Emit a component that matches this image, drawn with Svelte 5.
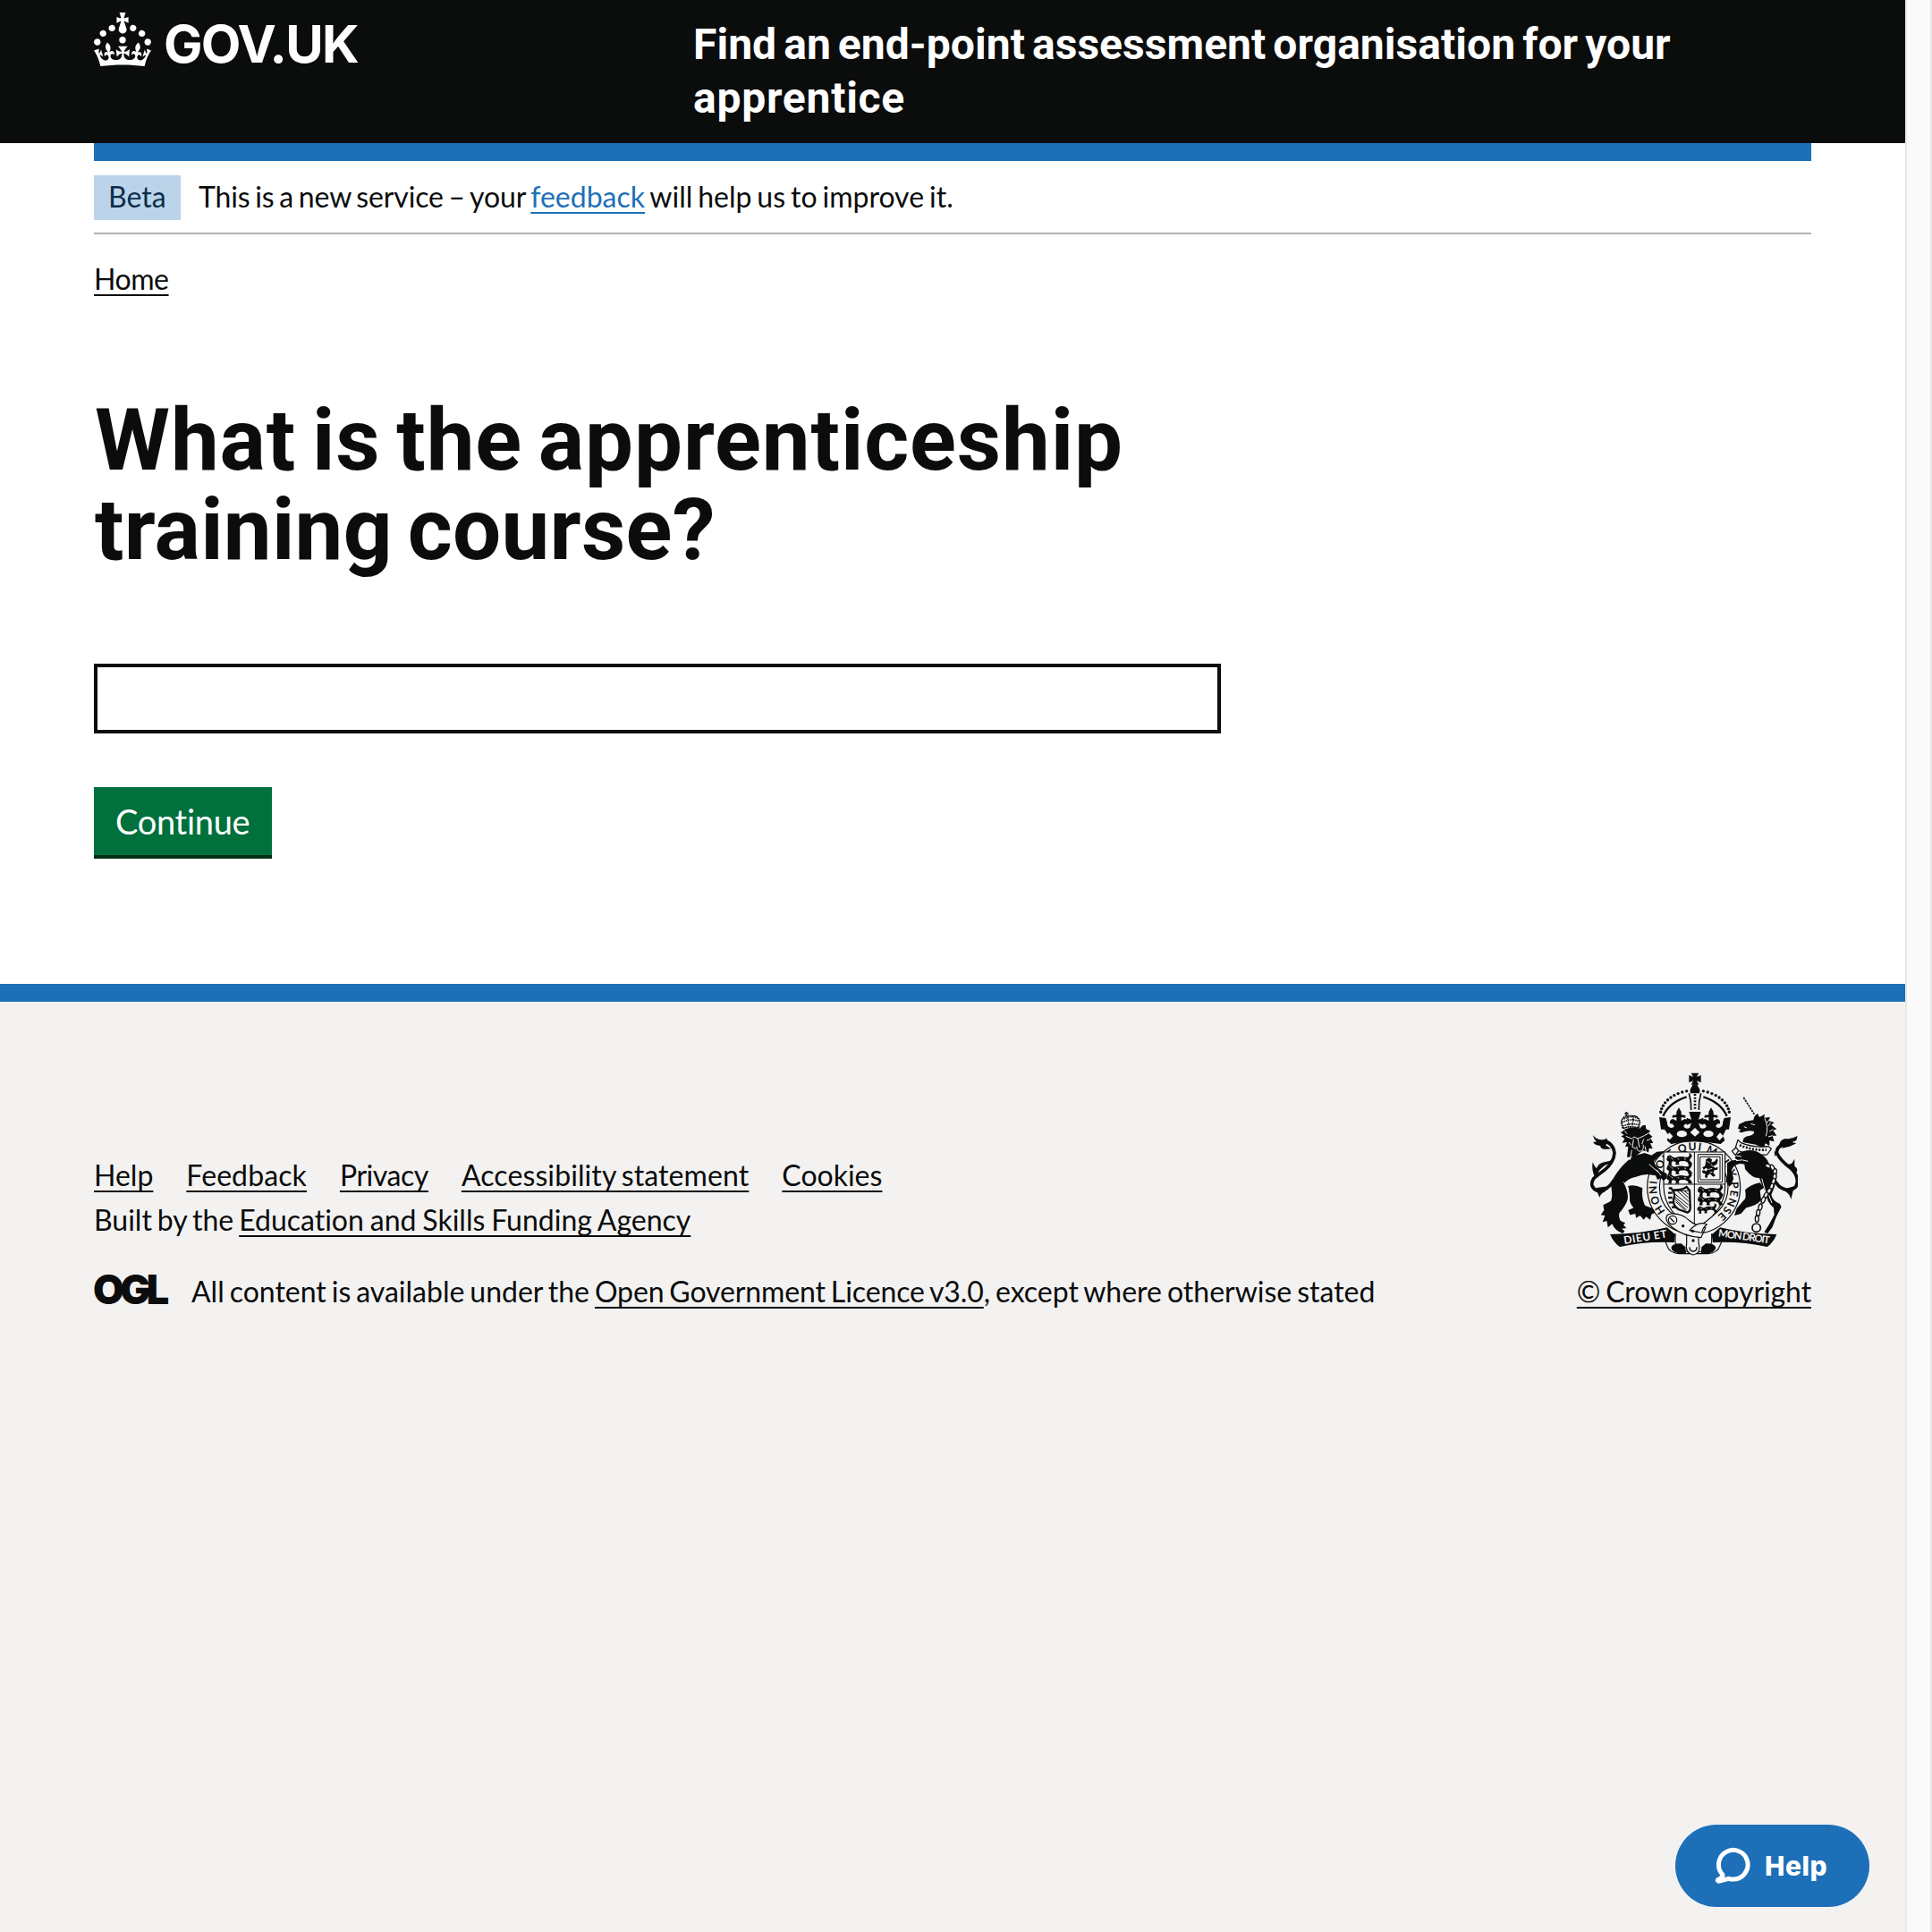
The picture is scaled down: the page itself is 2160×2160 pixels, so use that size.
<script>
  const footerLinks = [
    { label: 'Help', fit: '' },
    { label: 'Feedback', fit: 'wide' },
    { label: 'Privacy', fit: 'tight' },
    { label: 'Accessibility statement', fit: 'long' },
    { label: 'Cookies', fit: '' }
  ];

  // Pearls along the two arches of the royal crown
  const pearls = Array.from({ length: 10 }, (_, i) => {
    const a = ((i * 7.6 + 14) * Math.PI) / 180;
    return { dx: 116 * Math.sin(a), y: 202 - 84 * Math.cos(a) };
  });

  const passant =
    'M0 0q2-10 12-9l7 5q3 4 12 2 16-5 30-1 8 2 12-2 5-6 0-12l6 2q8 6 2 14l-6 8 9 10q2 5-3 6h-9l-2-8-10-5-16 1-5 5 3 7h-13l1-9-10-4-5 5 1 8h-12l3-11-6-3q-4-4-1-9z';
  const chain = [
    [714, 372, 20], [728, 378, 60], [736, 392, 95], [735, 408, 95], [731, 424, 110], [725, 441, 110],
    [716, 456, 125], [706, 470, 120], [697, 486, 110], [687, 510, 105], [680, 529, 95], [676, 549, 90]
  ];
</script>

{#snippet lion(x, y, r, s)}
  <g transform="translate({x} {y}) rotate({r}) scale({s})">
    <path d={passant} />
    <path class="nick" d="M14 0l6 5M36 1l4 5M58 2l6 3M8-4l3 3" />
  </g>
{/snippet}

<div class="page">
  <div class="site">
    <header class="header">
      <div class="container header-row">
        <a class="logo" href="#home" aria-label="GOV.UK">
          <svg class="crown" viewBox="0 0 32 30" aria-hidden="true">
            <path d="M22.6 10.4c-1 .4-2-.1-2.4-1-.4-.9.1-2 1-2.4.9-.4 2 .1 2.4 1s-.1 2-1 2.4m4.9 3c-1 .4-2-.1-2.4-1-.4-.9.1-2 1-2.4.9-.4 2 .1 2.4 1s0 2-1 2.4m3.3 4.8c-1 .4-2-.1-2.4-1-.4-.9.1-2 1-2.4.9-.4 2 .1 2.4 1s-.1 2-1 2.4M17 4.7l2.3 1.2V2.5l-2.3.7-.2-.2.9-3h-3.4l.9 3-.2.2c-.1.1-2.3-.7-2.3-.7v3.4L15 4.7c.1.1.1.2.2.2l-1.3 4c-.1.2-.1.4-.1.6 0 1.1.8 2 1.9 2.2h.7c1-.2 1.9-1.1 1.9-2.1 0-.2 0-.4-.1-.6l-1.3-4c-.1-.2 0-.2.1-.3m-7.6 5.7c.9.4 2-.1 2.4-1 .4-.9-.1-2-1-2.4-.9-.4-2 .1-2.4 1s0 2 1 2.4m-5 3c.9.4 2-.1 2.4-1 .4-.9-.1-2-1-2.4-.9-.4-2 .1-2.4 1s.1 2 1 2.4m-3.2 4.8c.9.4 2-.1 2.4-1 .4-.9-.1-2-1-2.4-.9-.4-2 .1-2.4 1s0 2 1 2.4m14.8 11c4.4 0 8.6.3 12.3.8 1.1-4.5 2.4-7 3.7-8.8l-2.5-.9c.2 1.3.3 1.9 0 2.7-.4-.4-.8-1.1-1.1-2.3l-1.2 4c.7-.5 1.3-.8 2-.9-1.1 2.5-2.6 3.1-3.5 3-1.1-.2-1.7-1.2-1.5-2.1.3-1.2 1.5-1.5 2.1-.1 1.1-2.3-.8-3-2-2.3 1.9-1.9 2.1-3.5.6-5.6-2.1 1.6-2.1 3.2-1.2 5.5-1.2-1.4-3.2-.6-2.5 1.6.9-1.4 2.1-.5 1.9.8-.2 1.1-1.7 2.1-3.5 1.9-2.7-.2-2.9-2.1-2.9-3.6.7-.1 1.9.5 2.9 1.9l.4-4.3c-1.1 1.1-2.1 1.4-3.2 1.4.4-1.2 2.1-3 2.1-3h-5.4s1.7 1.9 2.1 3c-1.1 0-2.1-.2-3.2-1.4l.4 4.3c1-1.4 2.2-2 2.9-1.9-.1 1.5-.2 3.4-2.9 3.6-1.9.2-3.4-.8-3.5-1.9-.2-1.3 1-2.2 1.9-.8.7-2.3-1.2-3-2.5-1.6.9-2.2.9-3.9-1.2-5.5-1.5 2-1.3 3.7.6 5.6-1.2-.7-3.1 0-2 2.3.6-1.4 1.8-1.1 2.1.1.2.9-.3 1.9-1.5 2.1-.9.2-2.4-.5-3.5-3 .6 0 1.2.3 2 .9l-1.2-4c-.3 1.1-.7 1.9-1.1 2.3-.3-.8-.2-1.4 0-2.7l-2.9.9C1.3 23 2.6 25.5 3.7 30c3.7-.5 7.9-.8 12.3-.8" />
            <circle cx="16" cy="15.4" r="1.85" />
          </svg>
          <span class="logotype">GOV.UK</span>
        </a>
        <a class="service" href="#service">
          <span class="line">Find an end-point assessment organisation for your</span>
          <span class="line second">apprentice</span>
        </a>
      </div>
    </header>

    <div class="container">
      <div class="bar"></div>
      <div class="phase">
        <strong class="tag">Beta</strong>
        <p class="phase-text"><span class="intro">This is a new service – your{' '}</span><a class="blue" href="#feedback">feedback</a><span class="outro">{' '}will help us to improve it.</span></p>
      </div>
      <nav class="crumbs"><a class="tight" href="#home">Home</a></nav>

      <main class="main">
        <h1><span class="line">What is the apprenticeship</span><span class="line second">training course?</span></h1>
        <input type="text" aria-label="Apprenticeship training course" />
        <button class="continue" type="button">Continue</button>
      </main>
    </div>

    <footer class="footer">
      <div class="container footer-row">
        <div class="meta">
          <ul class="links">
            {#each footerLinks as link}
              <li><a class={link.fit} href="#{link.label}">{link.label}</a></li>
            {/each}
          </ul>
          <p>Built by the <a class="agency" href="#esfa">Education and Skills Funding Agency</a></p>
          <div class="licence">
            <span class="ogl">OGL</span>
            <p>All content is available under the <a class="ogl-link" href="#ogl">Open Government Licence v3.0</a>, except where otherwise stated</p>
          </div>
        </div>
        <div class="crest">
          <svg viewBox="117 58 698 616" aria-hidden="true">
            <!-- Garter -->
            <circle class="out" cx="464" cy="443" r="156" />
            <circle class="out" cx="464" cy="443" r="115" />
            <path id="garter" fill="none" d="M369 523A124 124 0 1 1 527 550" />
            <text class="motto" font-size="36"><textPath href="#garter" textLength="585">HONI SOIT QUI MAL Y PENSE</textPath></text>

            <!-- Shield -->
            <path class="out" d="M363 325H569V440C569 505 525 555 466 580 407 555 363 505 363 440Z" />
            <path class="thin" d="M466 325V580M363 433H569M478 333H560V426H478ZM485 341H552V418H485Z" />
            {@render lion(374, 345, 0, 1)}
            {@render lion(374, 376, 0, 1)}
            {@render lion(374, 408, 0, 1)}
            {@render lion(478, 450, 0, 1)}
            {@render lion(478, 481, 0, 0.98)}
            {@render lion(476, 514, -4, 0.78)}
            <path d="M505 350l10-6 10 6-2 10 12-4 6-10 4 6-4 14-12 6 6 6 10-2-2 8-10 2-4 8 8 10-8 4-10-10-8 4-2 10-8-2 2-12-8-2-4-8 8-2 6 4 6-8-6-4-8 6-4-8 8-4 2-6z" />
            <path class="nick" d="M508 356l10 6M520 366l10 8M512 384l14-4M518 394l8-2" />
            <g class="harp">
              <path d="M396 455L446 455M396 462L446 502M396 472L444 512M400 482L440 520M404 492L436 522M408 455L446 490M420 455L446 478M432 455L446 467" />
              <path class="frame" d="M392 452q12 14 4 34-2 20 18 32l28 10q12-4 10-22l-2-52-10-12q-16 12-48 10z" />
              <path class="frame" d="M380 446h12M378 462h14M378 478h14M380 494h14M390 510h14" />
            </g>

            <!-- Royal crown -->
            <path d="M455 60h26l-7 13 14-6v25l-14-6 7 13h-26l7-13-14 6v-25l14 6z" />
            <path d="M461 98h14l4 8q8 10 4 22h-30q-4-12 4-22z" />
            {#each pearls as p}
              <circle cx={468 - p.dx} cy={p.y} r="5" />
              <circle cx={468 + p.dx} cy={p.y} r="5" />
            {/each}
            <path class="arch" d="M440 140Q382 158 361 204M496 140Q554 158 575 204" />
            <path class="band" d="M448 128Q456 155 455 184M488 128Q480 155 481 184" />
            <path class="dots" d="M468 130V184" />
            <path d="M348 208l22 3 4 12 4 26 -24 0zM588 208l-22 3-4 12-4 26 24 0z" />
            <path d="M360 240l16-4q8 14 22 4-2-12-14-10-2-14 10-16l12 6v-12l-14 2v-8l14-2 0-10 8-14 8 14 0 10 14 2v8l-14-2v12l12-6q12 2 12 16-14-2-16 10 8 10 20 4l6-16-16 6v-24l16 6-8-26h40l-8 26 16-6v24l-16-6 6 16q12 6 20-4-2-12-16-10 0-14 12-16l12 6v-12l-14 2v-8l14-2 0-10 8-14 8 14 0 10 14 2v8l-14-2v12l12-6q12 2 10 16-12-2-14 10 14 10 22-4l16 4-14 30 6 16-14 12q-94-16-166 0l-14-12 6-16z" />
            <path class="gem" d="M468 244l16 15-16 14-16-14zM382 260l12 12-10 12-14-12zM552 260l12 12-14 14-10-12z" />
            <ellipse class="gem" cx="424" cy="264" rx="17" ry="11" />
            <ellipse class="gem" cx="513" cy="264" rx="17" ry="11" />

            <!-- Lion supporter -->
            <path class="tail" d="M196 420Q168 462 138 454 112 440 128 414 144 400 164 386 196 360 198 328 192 292 160 288" />
            <path d="M126 268q12 16 30 16 16 0 14-8l8 16-10 10 18 12q-34 6-36-10-18-2-24-12l12-2q-10-8-12-22zM198 345q-12 18-34 26l-16 14-14 26q-14-24-9-52 6 16 13 20 8-18 26-20 18-2 34-14zM138 445q2 18 10 32 4-14 16-18l18-20z" />
            <path d="M262 338C235 358 205 390 188 425 184 450 196 470 185 490L160 503 163 520 152 536 166 538 158 560 172 556 176 578 190 566Q200 590 226 598L232 590 222 582 238 580 228 570 234 562Q208 558 214 530 236 505 242 484 246 462 230 430 246 412 270 408 300 396 325 402L336 404 342 418 354 412 362 422 374 412 374 398 358 390Q332 372 330 356L352 334 364 322 340 324 322 336 300 328Z" />
            <path d="M243 440Q262 432 292 446 288 480 300 504L326 514 334 528 322 534 318 552 304 542 296 552 284 538 270 546 268 532 250 536 244 520 262 512Q246 496 248 470Z" />
            <path d="M218 258l8-2 4-6q28-12 52-4l10-10 10-2 2 14 14 6-6 8 14 12-8 4 10 16-10 2 8 18-12-2-2 14-18-6-28 20-26 2 4-36-10 2 6-16-16 2 8-14-12-8 10-4z" />
            <path class="face" d="M236 272l20 8 8-6 12 6 22-10M262 282l-4 26 12 6M276 280l6 30M246 292l8 10M296 282l-6 16M272 306q2 20 14 16 12-4 8-22M256 318l-6 34M300 306l6 24M228 425l16 20 4 40M312 262l-14 8M318 282l-12 4M232 254l8 10M314 366l30 26M340 384l14 20" />
            <g class="little-crown">
              <path d="M226 246l-5-20q2-16 16-22h30q14 6 16 20l-4 20q-28-8-53 2zM238 190v14M232 196h13" />
              <path class="dots2" d="M224 226Q252 210 280 222M230 214Q252 200 276 212M226 238Q254 226 280 234M242 206l4 30M262 206l-4 30" />
            </g>

            <!-- Unicorn supporter -->
            <path class="horn" d="M631 142L668 200" />
            <path d="M664 218q2-16 14-22l6 12 18-10-2 12 20-2-6 12 20 6-10 8 18 14-12 4 12 18-14 0 6 20-16-4 0 18-14-8-6 16-26-12-44-8q0-20 24-22 16-4 14-14-12-4-30 0l-12 4-10-4 8-6-10-4 4-14 20-10z" />
            <path class="face" d="M655 230l14 4M702 212q14 30 4 60M722 226l-8 12M730 248l-12 8M728 270l-14 4M714 220l-6 8M632 240l10 4" />
            <path class="out" d="M612 284l10 10q46 18 92 12l10 8-14 20q-60 4-108-18z" />
            <path class="dots" d="M618 302Q660 320 708 318" />
            <path class="tail" d="M790 286Q742 302 742 326 752 352 790 380 822 412 806 442 782 464 750 440L734 420" />
            <path d="M812 270l-4 16-14 6 14 4-22 10-26 6 4-16-14 6q4-20 22-22 20 4 40-10zM754 312l10-28 6-4v20zM744 330l-10-8 2 18zM776 366q16 2 20-8l6-10 0 24q14 8 6 22zM800 440q-4 22-10 44-4-16-12-22l-14-12z" />
            <path d="M606 334Q640 312 672 322 704 334 718 366 744 402 736 438L724 468Q728 488 752 498L758 508 740 544 728 576 712 598 700 594 718 566 734 536 732 512Q706 490 708 462 694 444 684 412 660 414 636 382L634 366Q612 360 592 370L586 398 594 420 584 442 572 424 576 400 576 362Q590 350 612 352L602 346Z" />
            <path d="M686 428Q658 432 636 452 640 474 636 482L608 514 600 538 622 532 640 512Q676 504 690 486L686 454 700 444Z" />
            <path class="foreleg" d="M620 358Q592 362 586 386L592 414 584 436" />
            <path class="face" d="M606 354q20-6 40 2M692 414l12 42M716 470l10 26M600 336l24 4" />
            <path class="out" d="M592 322l14-12 8 10-10 16z" />
            {#each chain as [x, y, r]}
              <ellipse class="link" cx={x} cy={y} rx="11" ry="6" transform="rotate({r} {x} {y})" />
            {/each}
            <circle class="ring" cx="674" cy="579" r="14" />

            <!-- Motto scroll and buckled strap -->
            <path class="out" d="M402 600q-10 20-34 24l6 14q8 26 40 28h48q-50-14-60-36zM524 600q10 20 34 24l-6 14q-8 26-40 28h-48q50-14 60-36z" />
            <path d="M388 646q4-16 34-14l14 12 2 20q-44 6-50-18zM538 646q-4-16-34-14l-14 12-2 20q44 6 50-18z" />
            <path d="M183 601Q286 600 374 578L402 602 398 628Q300 624 216 643 196 630 183 601ZM742 601Q640 600 552 578L524 602 528 628Q626 624 710 643 730 630 742 601Z" />
            <text class="scroll" x="231" y="634" font-size="36" textLength="146" transform="rotate(-9 231 634)">DIEU ET</text>
            <text class="scroll" x="545" y="608" font-size="34" textLength="174" transform="rotate(8 545 608)">MON DROIT</text>
            <path class="out" d="M440 590h40v40q10 34-18 40-28-6-22-40z" />
            <path class="out" d="M388 532q36-2 60 22 20 18 56 24l-16 34q-60-4-96-34-28-22-18-40 6-6 14-6z" />
            <path class="out" d="M450 588q30-34 58-20-16 12-16 28z" />
            <circle class="out" cx="393" cy="553" r="14" />
            <circle cx="428" cy="573" r="5" /><circle cx="460" cy="590" r="5" /><circle cx="462" cy="622" r="5" />
            <path class="face-k" d="M450 644q0 14 12 14t12-14M384 546l14 14" />
          </svg>
          <a class="crown-link" href="#copyright">© Crown copyright</a>
        </div>
      </div>
    </footer>
  </div>
  <div class="gutter"></div>

  <button class="help-widget" type="button">
    <svg viewBox="0 0 40 42" aria-hidden="true">
      <path d="M9.5 31.5A16.3 16.3 0 1 1 20 36q-2.500 0-4.500-.7L4.500 38.300Q2.500 37.500 4 36.300 9.500 34.500 9 30.500" />
    </svg>
    <span>Help</span>
  </button>
</div>

<style>
  :global(body) { margin: 0; }
  * { box-sizing: border-box; }
  .page {
    position: relative;
    display: flex;
    width: 2160px;
    height: 2160px;
    background: #fff;
    color: #0b0c0c;
    font: 400 32px/40px Lato, sans-serif;
    font-variant-ligatures: none;
    word-spacing: -2.25px;
    overflow: hidden;
  }
  .site { width: 2130px; display: flex; flex-direction: column; }
  .gutter { width: 30px; background: #fafafa; border: solid #e8e8e8; border-width: 0 2px; }
  .container { width: 1920px; margin: 0 auto; }
  p, ul, h1 { margin: 0; padding: 0; }
  a { color: inherit; text-decoration: underline 2px; text-underline-offset: 5px; text-decoration-skip-ink: none; }
  .tight { letter-spacing: -0.44px; }
  .wide { letter-spacing: 0.1px; }
  .long { letter-spacing: 0.1px; }

  .header { height: 160px; background: #0b0c0c; color: #fff; }
  .header-row { display: flex; }
  .header a { text-decoration: none; }
  .logo { display: flex; width: 670px; padding-top: 14px; }
  .crown { width: 64px; height: 60px; fill: #fff; }
  .logotype { margin-left: 14px; font: 700 58px/70px Inter, sans-serif; letter-spacing: -1.7px; }
  .service { padding-top: 20px; font: 700 48px/60px Roboto, sans-serif; letter-spacing: 0.05px; word-spacing: -4px; }
  .line { display: block; white-space: nowrap; }
  .service .second { letter-spacing: 0.75px; }

  .bar { height: 20px; background: #1d70b8; }
  .phase { display: flex; height: 82px; padding-top: 16px; border-bottom: 2px solid #b1b4b6; }
  .tag { width: 97px; height: 50px; padding: 4px 0 0 16px; background: #bbd4ea; color: #0c2d4a; font-weight: 400; }
  .phase-text { margin: 4px 0 0 20px; white-space: pre; }
  .intro { letter-spacing: -0.13px; word-spacing: -2.3px; }
  .blue { color: #1d70b8; }
  .crumbs { padding-top: 30px; }

  .main { display: flex; flex-direction: column; align-items: flex-start; padding: 110px 0 144px; }
  h1 { font: 700 96px/100px Roboto, sans-serif; letter-spacing: 0.9px; word-spacing: -7px; }
  h1 .line { padding-left: 1px; }
  h1 .second { letter-spacing: 0.25px; }
  input { width: 1260px; height: 78px; margin-top: 100px; border: 4px solid #0b0c0c; border-radius: 0; background: #fff; }
  .continue {
    width: 199px; height: 76px; margin-top: 60px; padding: 0 0 0 24px; border: 0;
    background: #00703c; box-shadow: 0 4px 0 #002d18; color: #fff; text-align: left;
    font: 400 38px/76px Lato, sans-serif; letter-spacing: -0.3px;
  }

  .footer { flex: 1; border-top: 20px solid #1d70b8; background: #f3f2f1; }
  .footer-row { display: flex; justify-content: space-between; align-items: flex-end; padding-top: 79px; }
  .links { display: flex; gap: 37px; list-style: none; margin-bottom: 10px; }
  .agency { word-spacing: -1.3px; }
  .licence { display: flex; margin-top: 40px; }
  .licence p { margin-left: 27px; white-space: nowrap; }
  .ogl { width: 82px; font: 900 45px/36px Inter, sans-serif; letter-spacing: -4.6px; text-indent: -1px; white-space: nowrap; }
  .ogl-link { letter-spacing: -0.1px; }
  .crest { display: flex; flex-direction: column; align-items: center; }
  .crest svg { width: 232.7px; height: 205.3px; margin-bottom: 20px; fill: #0b0c0c; }
  .crown-link { letter-spacing: -0.1px; }

  .out { fill: #f3f2f1; stroke: #0b0c0c; stroke-width: 3.5; stroke-linejoin: round; }
  .thin { fill: none; stroke: #0b0c0c; stroke-width: 3; }
  .motto { font-family: Lato, sans-serif; font-weight: 700; word-spacing: 0; }
  .scroll { font-family: Lato, sans-serif; font-weight: 700; fill: #f3f2f1; word-spacing: 0; }
  .nick { fill: none; stroke: #f3f2f1; stroke-width: 2.5; }
  .harp path { fill: none; stroke: #0b0c0c; stroke-width: 3; }
  .harp .frame { stroke-width: 7; }
  .arch { fill: none; stroke: #0b0c0c; stroke-width: 7; }
  .band { fill: none; stroke: #0b0c0c; stroke-width: 5; }
  .dots { fill: none; stroke: #0b0c0c; stroke-width: 8; stroke-dasharray: 6 5; }
  .gem { fill: #f3f2f1; }
  .tail { fill: none; stroke: #0b0c0c; stroke-width: 11; }
  .foreleg { fill: none; stroke: #0b0c0c; stroke-width: 10; }
  .face { fill: none; stroke: #f3f2f1; stroke-width: 3; }
  .face-k { fill: none; stroke: #0b0c0c; stroke-width: 4; }
  .little-crown path { fill: none; stroke: #0b0c0c; stroke-width: 5; stroke-dasharray: 6 1.5; }
  .little-crown .dots2 { stroke-dasharray: 4 2.5; }
  .horn { fill: none; stroke: #0b0c0c; stroke-width: 5; stroke-dasharray: 7 3; }
  .link { fill: #f3f2f1; stroke: #0b0c0c; stroke-width: 4; }
  .ring { fill: none; stroke: #0b0c0c; stroke-width: 5; }

  .help-widget {
    position: absolute; left: 1873px; top: 2040px; width: 217px; height: 92px; padding: 0 0 0 44px;
    display: flex; align-items: center; border: 0; border-radius: 46px; background: #1d70b8; color: #fff;
    font: 800 30px/40px Inter, sans-serif; letter-spacing: 0.5px;
  }
  .help-widget svg { width: 40px; height: 42px; margin-right: 16px; fill: none; stroke: #fff; stroke-width: 5; stroke-linejoin: round; }
</style>
